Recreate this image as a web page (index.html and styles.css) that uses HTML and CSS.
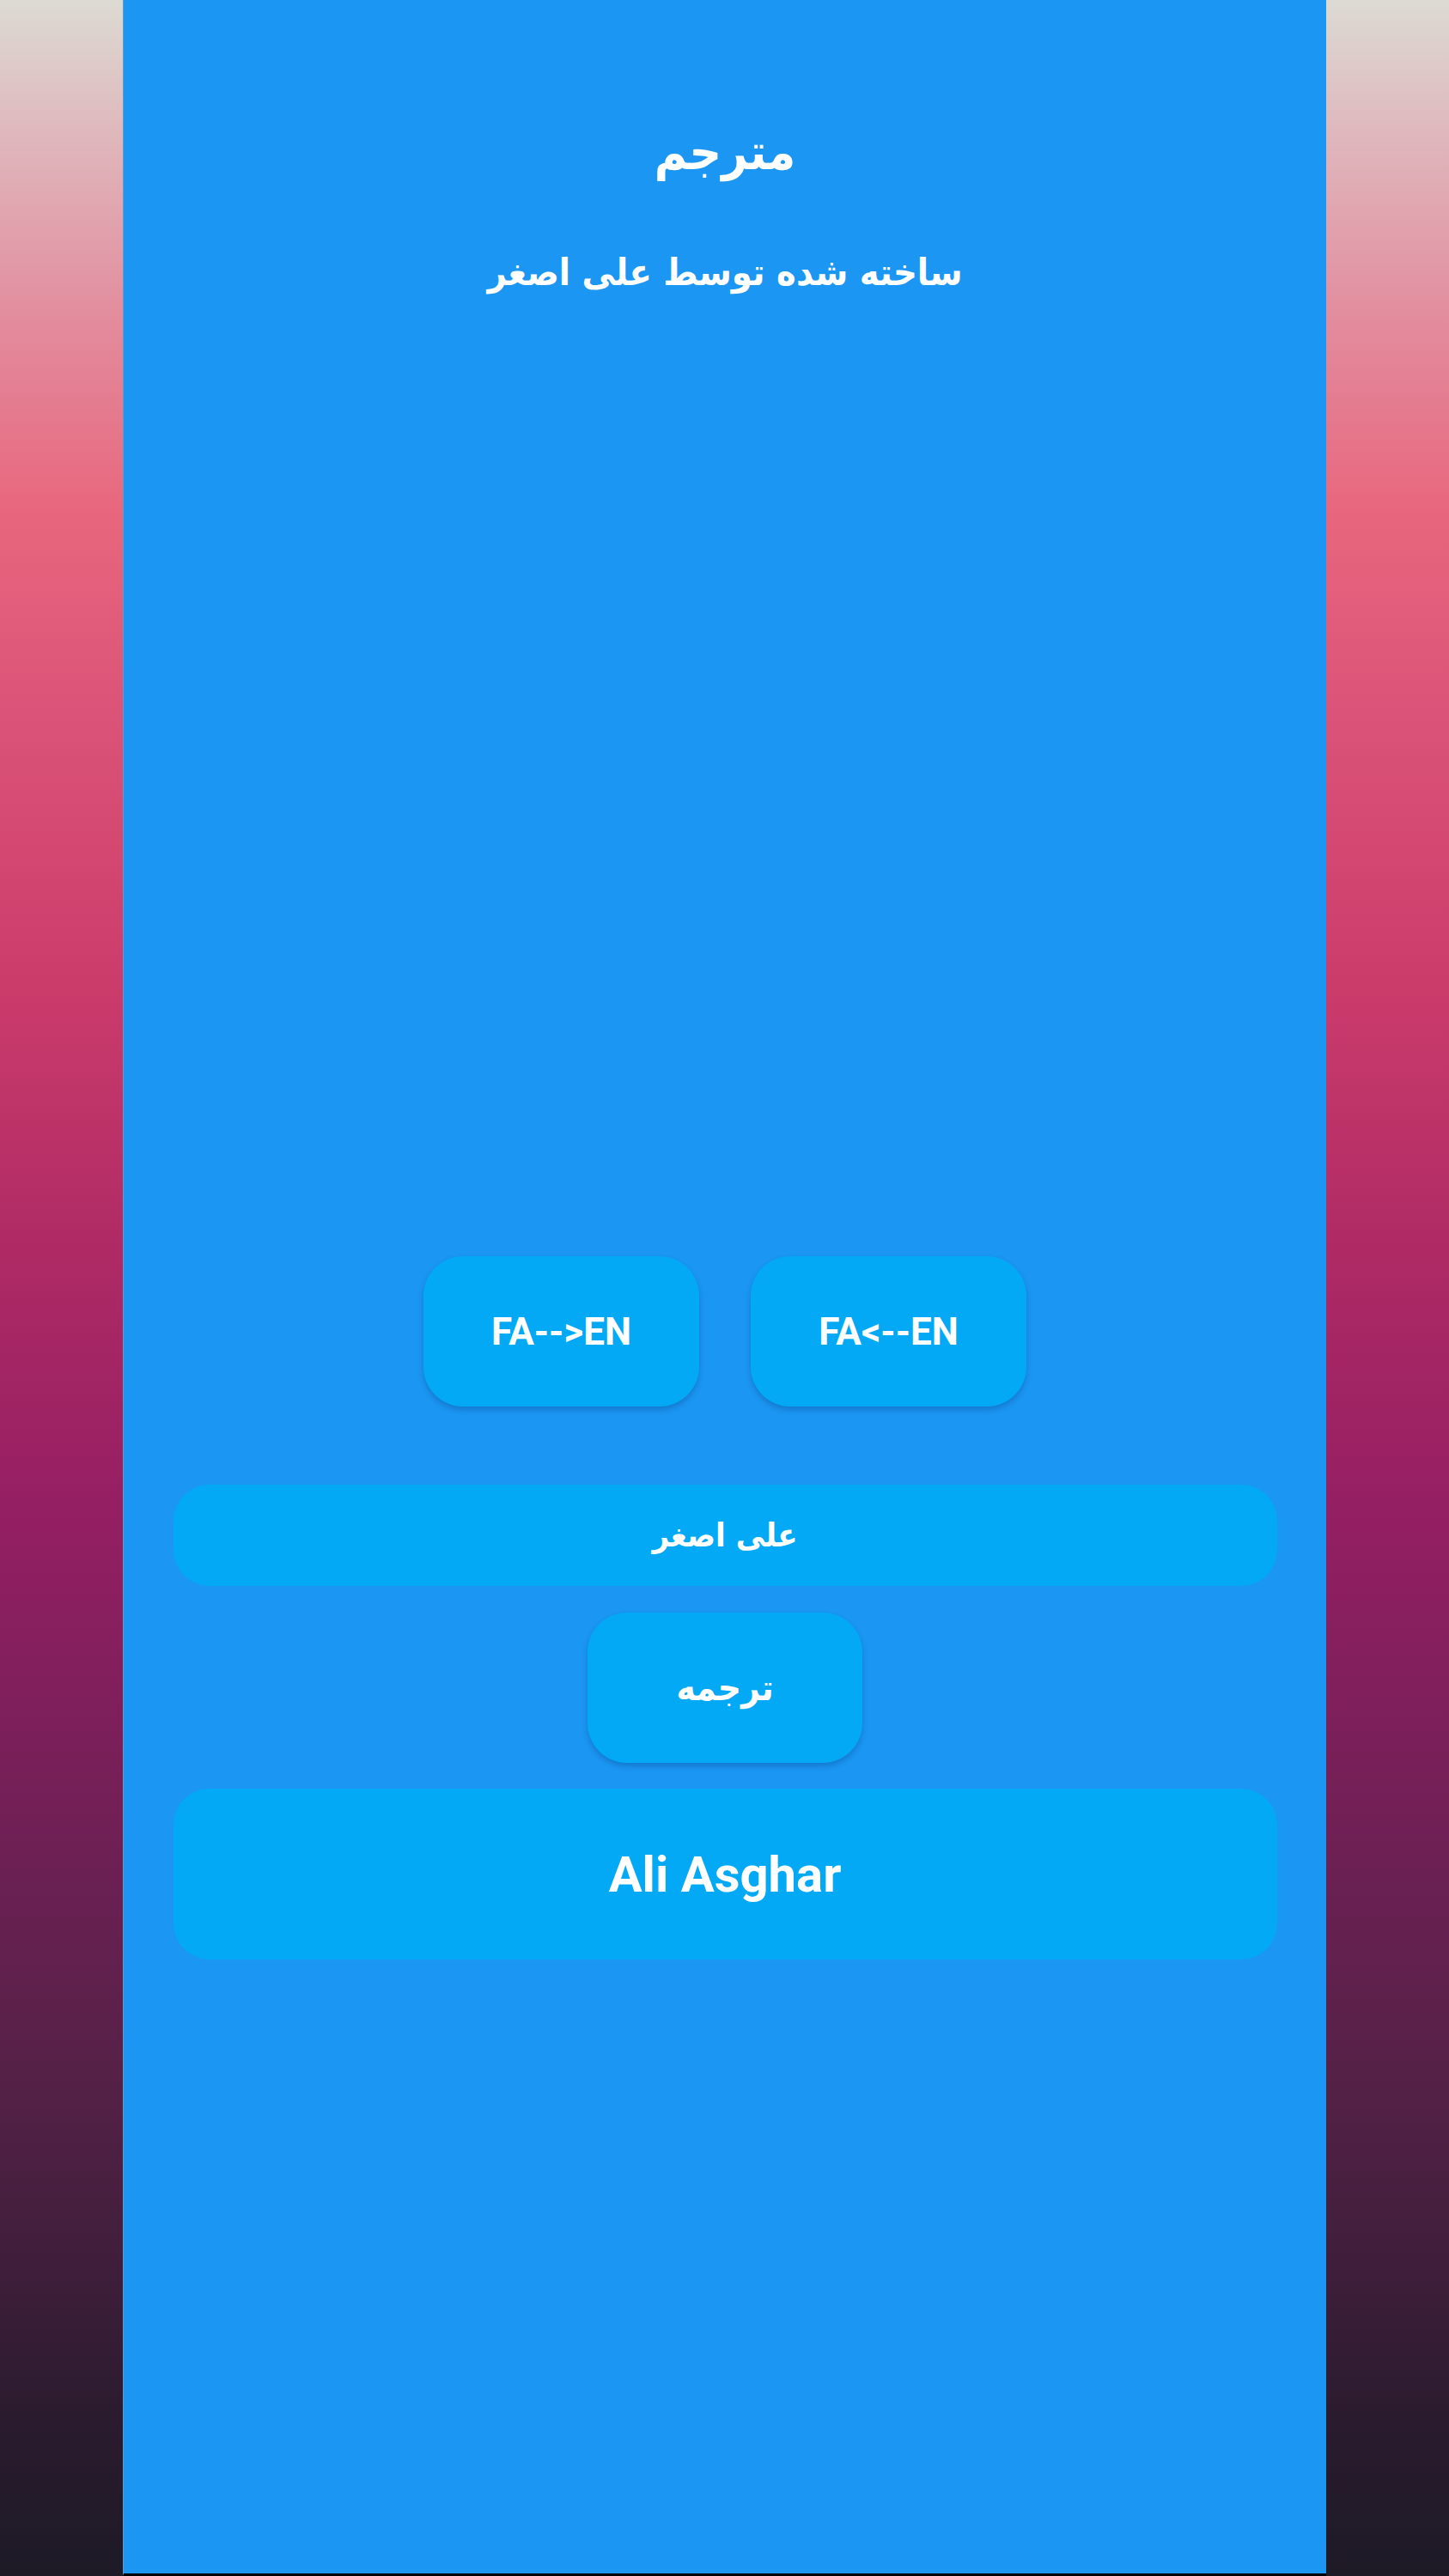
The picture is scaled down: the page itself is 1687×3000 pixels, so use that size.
FILE: index.html
```html
<!DOCTYPE html>
<html lang="fa">
<head>
<meta charset="utf-8">
<title>مترجم</title>
<link rel="stylesheet" href="styles.css">
</head>
<body>
<main class="app">
  <header class="head">
    <h1 class="title" dir="rtl">مترجم</h1>
    <p class="subtitle" dir="rtl">ساخته شده توسط علی اصغر</p>
  </header>
  <div class="modes">
    <button class="btn">FA--&gt;EN</button>
    <button class="btn">FA&lt;--EN</button>
  </div>
  <div class="field" dir="rtl">علی اصغر</div>
  <button class="btn btn-translate" dir="rtl">ترجمه</button>
  <div class="result">Ali Asghar</div>
</main>
</body>
</html>
```

FILE: styles.css
```css
html, body {
  margin: 0;
  padding: 0;
}
body {
  height: 3000px;
  overflow: hidden;
  background: linear-gradient(to bottom,
    #dcdbd3 0%,
    #dfb9bd 5%,
    #e28e9f 12%,
    #e8667d 20%,
    #dc5579 27%,
    #cc3c6b 38%,
    #b02b65 48%,
    #961f63 58%,
    #821f5c 65%,
    #6a2053 73%,
    #542146 81%,
    #3f1e3b 88%,
    #2a1b2e 94%,
    #1d1a26 100%);
  font-family: Roboto, "DejaVu Sans", sans-serif;
}
.app {
  box-sizing: border-box;
  width: 1401px;
  height: 3000px;
  margin-left: 143px;
  background: #1b96f3;
  border-bottom: 3px solid #000;
  border-left: 1px solid #5f9ccc;
  display: flex;
  flex-direction: column;
  align-items: center;
  color: #fff;
}
.head {
  display: flex;
  flex-direction: column;
  align-items: center;
  padding-top: 137px;
}
.title {
  margin: 0;
  font-family: "DejaVu Sans Condensed", "DejaVu Sans", sans-serif;
  font-size: 58px;
  font-weight: 700;
  line-height: 80px;
}
.subtitle {
  margin: 68px 0 0;
  font-family: "DejaVu Sans Condensed", "DejaVu Sans", sans-serif;
  font-size: 43px;
  font-weight: 700;
  line-height: 64px;
}
.modes {
  display: flex;
  gap: 60px;
  margin-top: 1114px;
}
.btn {
  width: 321px;
  height: 175px;
  border: none;
  border-radius: 46px;
  background: #03a9f4;
  color: #fff;
  font-family: Roboto, sans-serif;
  font-size: 44px;
  font-weight: 700;
  box-shadow: 0 4px 6px rgba(0, 40, 100, 0.25);
  padding: 0;
}
.field {
  box-sizing: border-box;
  width: 1285px;
  height: 118px;
  margin-top: 91px;
  border-radius: 42px;
  background: #03a9f4;
  display: flex;
  align-items: center;
  justify-content: center;
  font-family: "DejaVu Sans Condensed", "DejaVu Sans", sans-serif;
  font-size: 38px;
  font-weight: 700;
}
.btn-translate {
  width: 320px;
  margin-top: 31px;
  font-family: "DejaVu Sans Condensed", "DejaVu Sans", sans-serif;
  font-size: 42px;
}
.result {
  width: 1285px;
  height: 199px;
  margin-top: 30px;
  border-radius: 42px;
  background: #03a9f4;
  display: flex;
  align-items: center;
  justify-content: center;
  font-family: Roboto, sans-serif;
  font-size: 58px;
  font-weight: 700;
}
```
